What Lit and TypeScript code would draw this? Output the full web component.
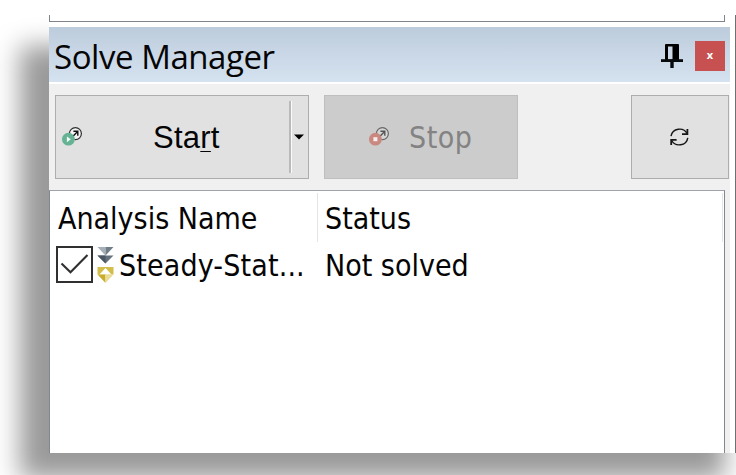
import { LitElement, html, css, svg } from "lit";
import { customElement, property } from "lit/decorators.js";

@customElement("job-icon")
class JobIcon extends LitElement {
  @property() kind = "start";
  static styles = css`
    :host { display: block; width: 22px; height: 20px; }
    svg { display: block; }
  `;
  render() {
    const stop = this.kind === "stop";
    return html`<svg width="22" height="20" viewBox="0 0 22 20">
      <circle cx="13.4" cy="6.6" r="6" fill=${stop ? "#d6d6d6" : "#f4f4f4"} stroke=${stop ? "#676767" : "#303030"} stroke-width="1.2"/>
      <path d="M10.8 9.4 15.6 4.5M11.4 4.3H15.8V8.8" fill="none" stroke=${stop ? "#555" : "#111"} stroke-width="1.4"/>
      <circle cx="6.4" cy="12.2" r="6.4" fill=${stop ? "#c98980" : "#65b294"}/>
      ${stop
        ? svg`<rect x="4.4" y="10.2" width="4" height="4" fill="#f7eeee"/>`
        : svg`<path d="M4.9 9.4 8.8 12.3 4.9 15.2Z" fill="#f4fffa"/>`}
    </svg>`;
  }
}

@customElement("app-root")
class AppRoot extends LitElement {
  static styles = css`
    * { box-sizing: border-box; }
    :host { display: block; box-sizing: border-box; width: 736px; height: 475px; overflow: hidden; background: #fff; padding: 15px 0 0 49px; color: #050505; }
    .shell { position: relative; z-index: 0; display: flex; width: 687px; height: 438px; background: none; }
    .shell::before { content: ""; position: absolute; z-index: -1; left: -29px; top: 31px; width: 705px; height: 433px; background: rgba(0,0,0,.4); filter: blur(13px); }
    .dock { width: 681px; display: flex; flex-direction: column; background: #fff; }
    .gap { flex: 1; border-right: 1px solid #707070; background: #fff; }
    .previous { height: 7px; width: 676px; border: 1px solid #80848c; border-top: 0; }
    .title { margin-top: 5px; height: 55px; background: linear-gradient(#bdccdc, #d5e2f0); display: flex; align-items: center; padding: 0 5px; }
    .body { margin-top: 2px; height: 369px; background: #f0f0f0; display: flex; flex-direction: column; }
    .text { white-space: pre; line-height: 40px; }
    .heading { font: 33px/40px "Open Sans", sans-serif; flex: 1; padding-top: 4px; letter-spacing: -.45px; }
    .pin { margin-right: 11px; }
    .close { width: 30px; height: 30px; background: #c75050; color: #fff; font: bold 11px/27px "Open Sans", sans-serif; text-align: center; margin-top: 2px; }
    .tools { height: 84px; margin-top: 11px; display: flex; padding-left: 6px; }
    .btn { border: 1px solid #adadad; background: #e1e1e1; display: flex; align-items: center; }
    .start { width: 254px; margin-right: 15px; padding-left: 6px; }
    .start .text { font: 31px/40px "Liberation Sans", sans-serif; margin-left: 69px; width: 137px; padding-top: 2px; letter-spacing: .25px; }
    .start u { text-decoration-thickness: 1px; text-underline-offset: 3px; text-decoration-skip-ink: none; }
    .split { width: 3px; height: 72px; border-left: 2px solid #bababa; border-right: 1px solid #fafafa; margin-left: -1px; }
    .arrow { margin-left: 2px; }
    .stop { width: 194px; background: #ccc; border-color: #bfbfbf; color: #838383; padding-left: 44px; margin-right: 113px; }
    .stop .text { margin-left: 18px; padding-top: 2px; letter-spacing: .5px; }
    .refresh { width: 98px; justify-content: center; }
    .list { width: 676px; margin-top: 11px; flex: 1; background: #fff; border: 1px solid #828790; border-bottom: 0; border-top-color: #a0a4aa; }
    .row { display: flex; height: 51px; padding-left: 8px; }
    .row > .c1, .row > .c2 { border-right: 1px solid #e5e5e5; margin-top: 2px; height: 49px; line-height: 52px; }
    .row > .c1 { width: 260px; }
    .row > .c2 { width: 405px; padding-left: 7px; }
    .tah { font: 30px/50px "DejaVu Sans Condensed", "DejaVu Sans", sans-serif; font-stretch: condensed; }
    .item { display: flex; height: 44px; align-items: center; padding-left: 6px; }
    .check { width: 37px; height: 37px; border: 2px solid #303030; margin-right: 4px; }
    .check svg { display: block; }
    .item .name { width: 206px; margin-left: 5px; letter-spacing: .15px; }
    .item .text { padding-top: 4px; }
  `;
  render() {
    return html`<div class="shell">
      <div class="dock">
        <div class="previous"></div>
        <div class="title">
          <div class="text heading">Solve Manager</div>
          <svg class="pin" width="24" height="28" viewBox="0 0 24 28">
            <rect x="5" y="3" width="14" height="17" rx="1" fill="#000"/>
            <rect x="8" y="5.5" width="4.5" height="13" fill="#cad8e7"/>
            <path d="M1 19.6H23" stroke="#080b0e" stroke-width="2.8"/>
            <path d="M12 20V27" stroke="#080b0e" stroke-width="3.4"/>
          </svg>
          <div class="close">x</div>
        </div>
        <div class="body">
          <div class="tools">
            <div class="btn start">
              <job-icon kind="start"></job-icon>
              <div class="text">Sta<u>r</u>t</div>
              <div class="split"></div>
              <svg class="arrow" width="11" height="6"><path d="M0 .5H10L5 5.5Z" fill="#000"/></svg>
            </div>
            <div class="btn stop">
              <job-icon kind="stop"></job-icon>
              <div class="text tah">Stop</div>
            </div>
            <div class="btn refresh">
              <svg width="20" height="20" viewBox="0 0 20 20" fill="none" stroke="#161616" stroke-width="1.4">
                <path d="M1 9.2A8.6 8.4 0 0 1 17.2 6.8M17.8 10.8A8.6 8.4 0 0 1 1.6 13.2"/>
                <path d="M17.4 2V7.2H12M1.2 18V12.8H6.6" stroke-width="1.8"/>
              </svg>
            </div>
          </div>
          <div class="list">
            <div class="row">
              <div class="text tah c1">Analysis Name</div>
              <div class="text tah c2">Status</div>
            </div>
            <div class="item">
              <div class="check"><svg width="33" height="33" viewBox="0 0 33 33"><path d="M3.5 15.5 12.5 24.2 29.5 7" fill="none" stroke="#303030" stroke-width="2.1"/></svg></div>
              <svg width="17" height="37" viewBox="0 0 17 37">
                <path d="M.5 1H8.5V9.5Z" fill="#a5afb8"/><path d="M8.5 1H16.5L8.5 9.5Z" fill="#717d87"/>
                <path d="M.5 9.5H16.5L8.5 17.5Z" fill="#65727e"/><path d="M.5 9.5H8.5V17.5Z" fill="#4a5662"/>
                <path d="M.5 21H16.5V28.5H.5Z" fill="#d3bd4b"/><path d="M2.5 28.5 8.5 22 14.5 28.5Z" fill="#fff"/>
                <path d="M.5 28.5H8.5V37Z" fill="#c7ad2b"/><path d="M8.5 28.5H16.5L8.5 37Z" fill="#e8dc96"/>
              </svg>
              <div class="text tah name">Steady-Stat...</div>
              <div class="text tah">Not solved</div>
            </div>
          </div>
        </div>
      </div>
      <div class="gap"></div>
    </div>`;
  }
}
